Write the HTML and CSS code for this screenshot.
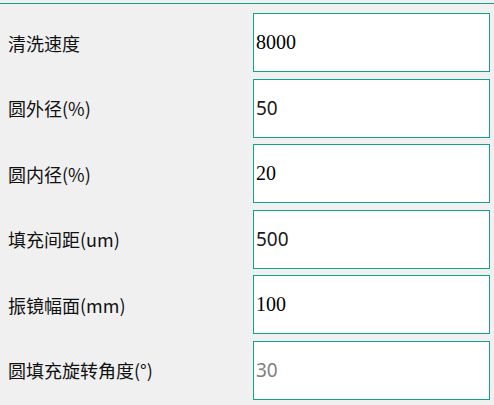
FILE: index.html
```html
<!DOCTYPE html>
<html>
<head>
<meta charset="utf-8">
<link rel="stylesheet" href="styles.css">
</head>
<body>
<div class="topline"></div>
<div class="form">
  <div class="label">清洗速度</div>
  <div class="field serif">8000</div>
  <div class="label">圆外径(%)</div>
  <div class="field sans">50</div>
  <div class="label">圆内径(%)</div>
  <div class="field serif">20</div>
  <div class="label">填充间距(um)</div>
  <div class="field sans">500</div>
  <div class="label">振镜幅面(mm)</div>
  <div class="field serif">100</div>
  <div class="label">圆填充旋转角度(°)</div>
  <div class="field sans muted">30</div>
</div>
</body>
</html>
```
FILE: styles.css
```css
html, body {
  margin: 0;
  padding: 0;
  background: #f0f0f0;
}
body {
  width: 494px;
  height: 405px;
  overflow: hidden;
}
.topline {
  margin-top: 3px;
  height: 1px;
  background: #12a08f;
}
.form {
  padding-top: 9px;
  padding-right: 4px;
  display: grid;
  grid-template-columns: 253px 1fr;
  grid-auto-rows: 59px;
  row-gap: 6.6px;
}
.label {
  display: flex;
  align-items: center;
  padding-left: 8px;
  font-family: "Noto Sans CJK SC", "Noto Sans", sans-serif;
  font-size: 18px;
  color: #111;
}
.field {
  display: flex;
  align-items: center;
  background: #fff;
  border: 1px solid #12a08f;
  padding-left: 2px;
  font-size: 20px;
  color: #000;
}
.serif {
  font-family: "Liberation Serif", serif;
}
.sans {
  font-family: "Noto Sans", sans-serif;
  font-size: 19px;
  color: #1a1a1a;
}
.muted {
  color: #808080;
}
```
